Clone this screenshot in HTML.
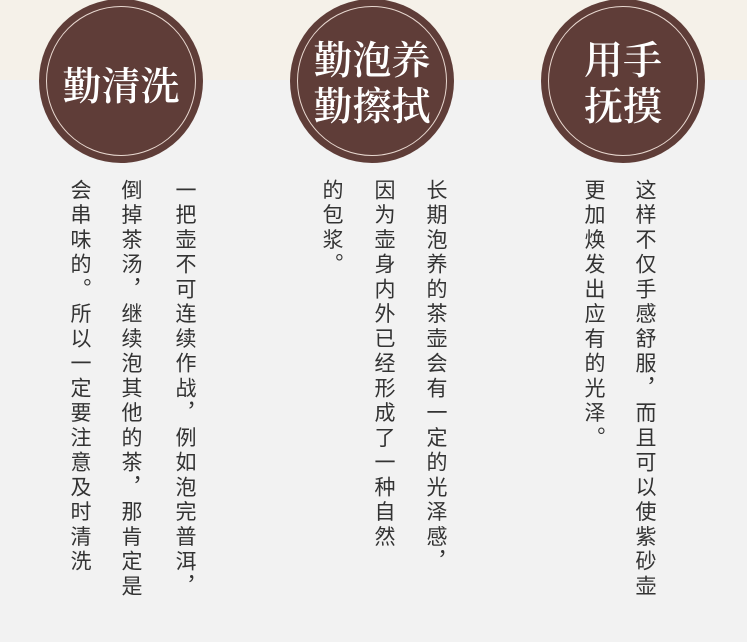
<!DOCTYPE html>
<html><head><meta charset="utf-8"><style>
html,body{margin:0;padding:0}
body{width:747px;height:642px;background:#f2f2f2;position:relative;overflow:hidden;font-family:"Liberation Sans","Noto Sans CJK SC",sans-serif}
.top{position:absolute;left:0;top:0;width:747px;height:80px;background:#f5f1e9}
.c{position:absolute;width:164px;height:164px;border-radius:50%;background:#5f3d38;top:-1px}
.c:after{content:"";position:absolute;left:7px;top:7px;right:7px;bottom:7px;border:1.5px solid #e8d8d0;border-radius:50%}
.t{position:absolute;left:0;right:0;color:#fff;font-family:"Noto Serif CJK SC",serif;font-weight:600;text-align:center;line-height:46px;font-size:39px}
.col{position:absolute;top:179px;writing-mode:vertical-rl;font-size:21px;color:#333;letter-spacing:3.75px;line-height:24px;white-space:nowrap}
</style></head><body>
<div class="top"></div>
<div class="c" style="left:39px"><div class="t" style="top:62px">勤清洗</div></div>
<div class="c" style="left:290px"><div class="t" style="top:36px">勤泡养<br>勤擦拭</div></div>
<div class="c" style="left:541px"><div class="t" style="top:36px">用手<br>抚摸</div></div>

<div class="col" style="left:172px">一把壶不可连续作战，例如泡完普洱，</div>
<div class="col" style="left:118px">倒掉茶汤，继续泡其他的茶，那肯定是</div>
<div class="col" style="left:67px">会串味的。所以一定要注意及时清洗</div>

<div class="col" style="left:423px">长期泡养的茶壶会有一定的光泽感，</div>
<div class="col" style="left:371px">因为壶身内外已经形成了一种自然</div>
<div class="col" style="left:319px">的包浆。</div>

<div class="col" style="left:632px">这样不仅手感舒服，而且可以使紫砂壶</div>
<div class="col" style="left:581px">更加焕发出应有的光泽。</div>
</body></html>
